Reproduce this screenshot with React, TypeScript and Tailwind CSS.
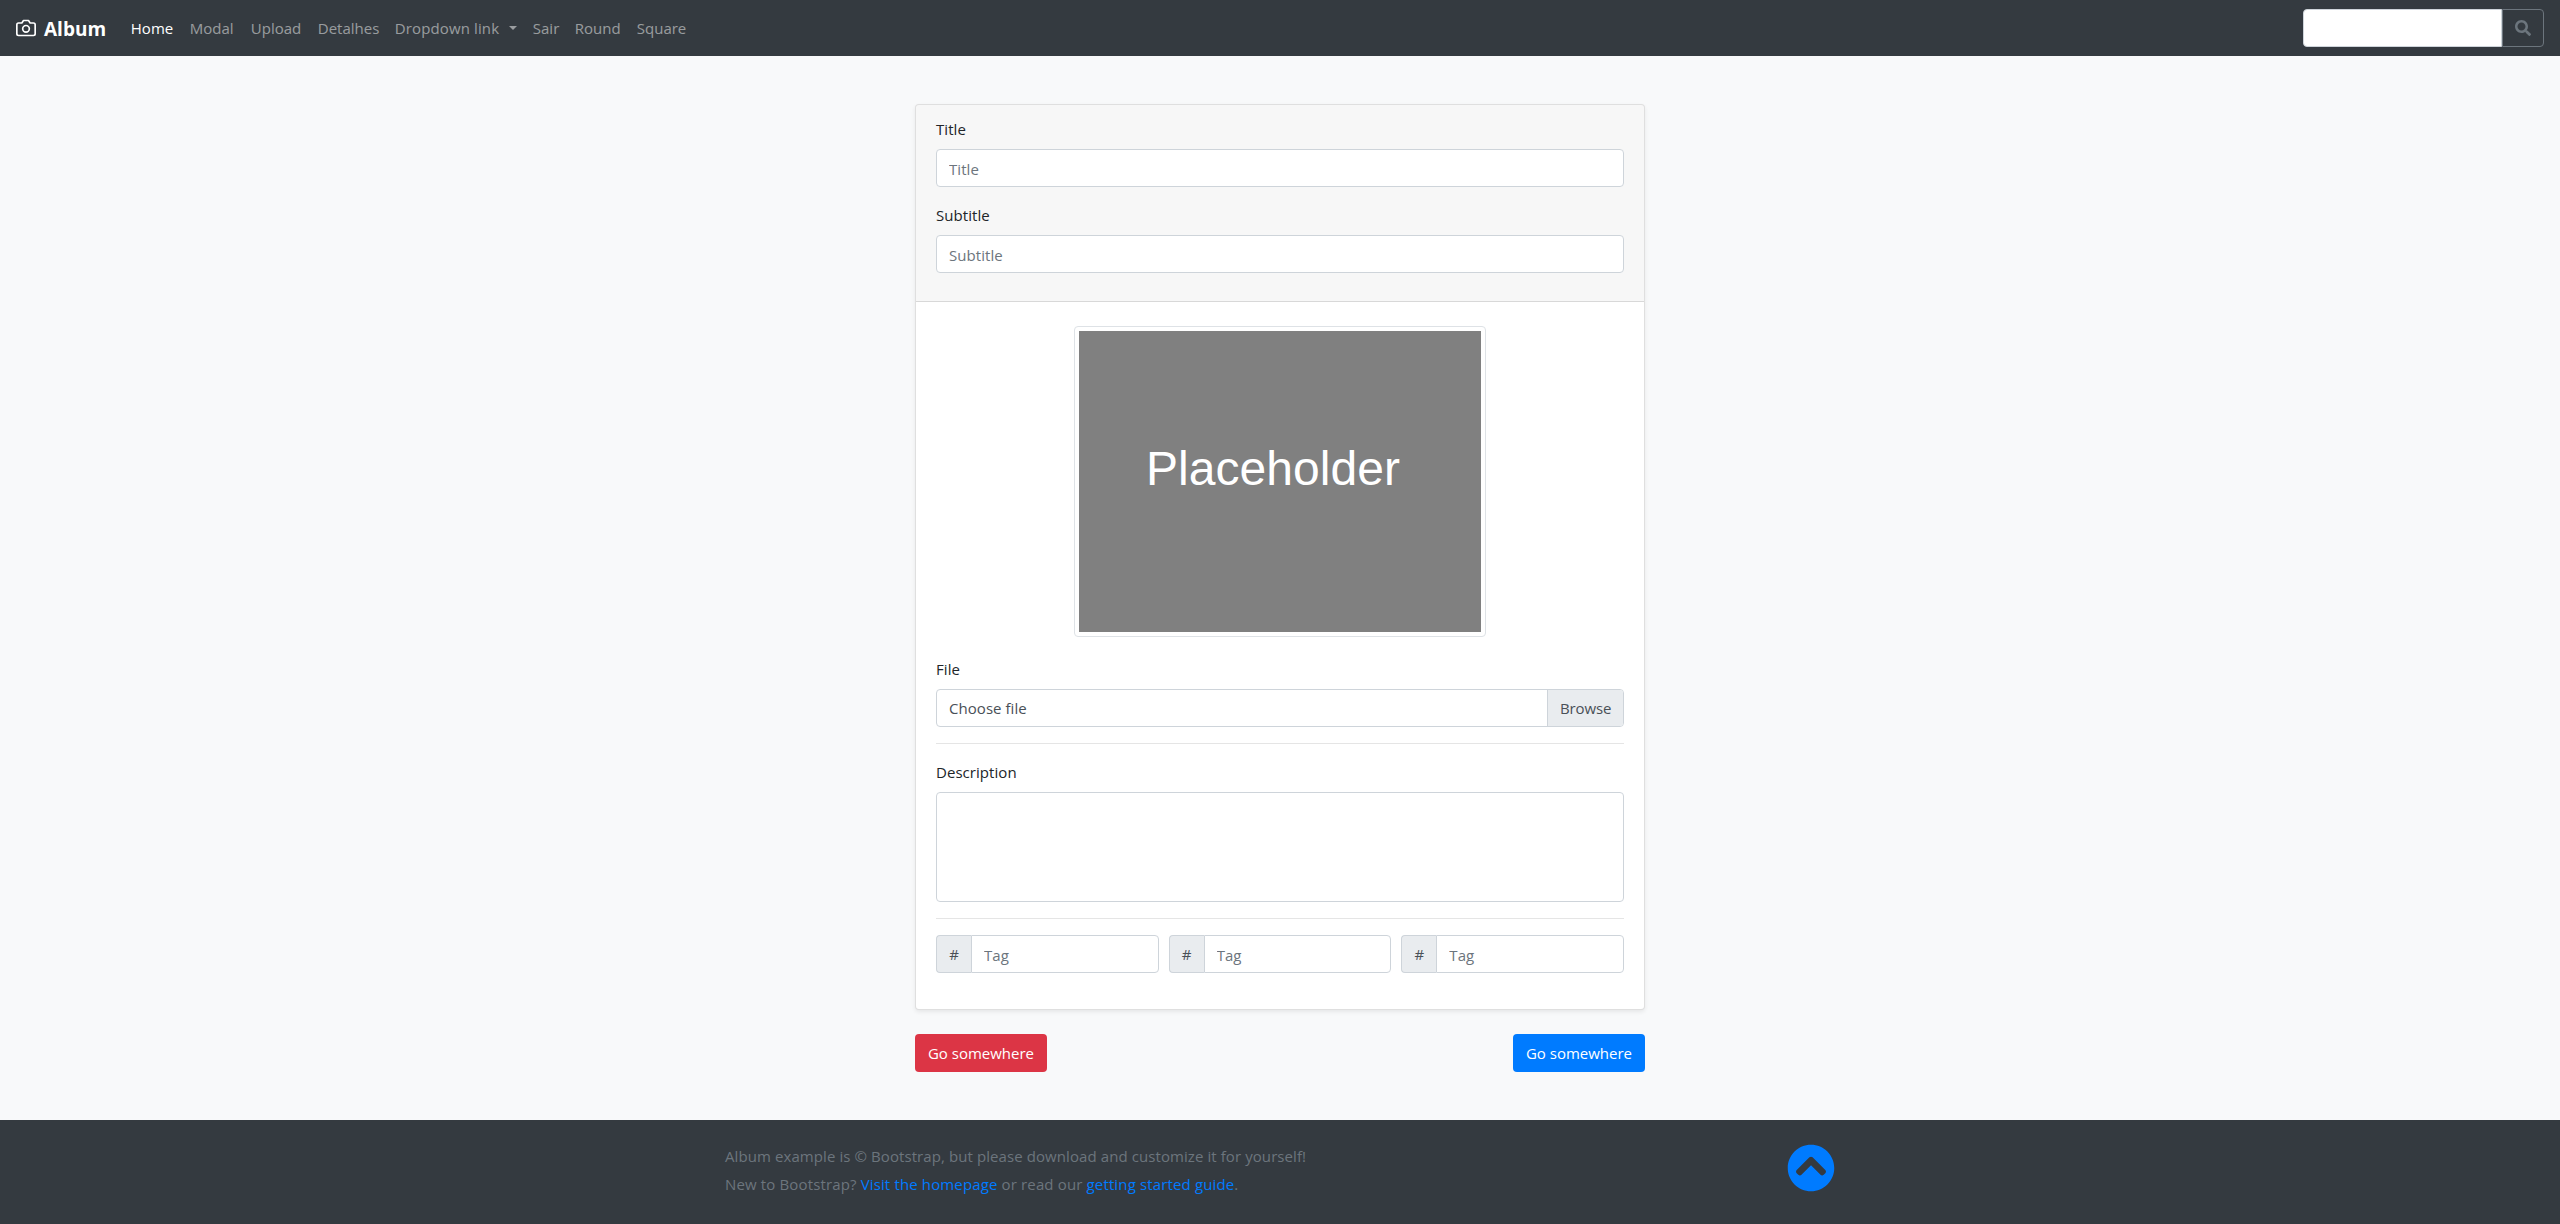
import React from "react";
import { FaChevronCircleUp, FaSearch } from "react-icons/fa";

const navItems = [
  { label: "Home", width: "w-[59px]", active: true },
  { label: "Modal", width: "w-[61px]" },
  { label: "Upload", width: "w-[67px]" },
  { label: "Detalhes", width: "w-[77px]" },
  { label: "Dropdown link", width: "w-[138px] tracking-[0.12px]", caret: true },
  { label: "Sair", width: "w-[42px]" },
  { label: "Round", width: "w-[62px]" },
  { label: "Square", width: "w-[65px]" },
];

const field =
  "block w-full rounded border border-[#ced4da] bg-white px-3 text-[#495057] outline-none placeholder:text-[#6c757d] placeholder:opacity-100";

function CameraIcon() {
  return (
    <svg
      className="mr-2 size-5"
      viewBox="0 0 24 24"
      fill="none"
      stroke="currentColor"
      strokeWidth="2"
      strokeLinecap="round"
      strokeLinejoin="round"
    >
      <path d="M23 19a2 2 0 0 1-2 2H3a2 2 0 0 1-2-2V8a2 2 0 0 1 2-2h4l2-3h6l2 3h4a2 2 0 0 1 2 2z" />
      <circle cx="12" cy="13" r="4" />
    </svg>
  );
}

function Navbar() {
  return (
    <header className="flex h-14 items-center bg-[#343a40] px-4">
      <a href="#" className="flex w-[106.8px] items-center text-white">
        <CameraIcon />
        <strong className="pt-px text-[19px] leading-[30px] font-bold">Album</strong>
      </a>
      <nav className="flex">
        {navItems.map((item) => (
          <a
            key={item.label}
            href="#"
            className={`flex items-center px-2 whitespace-nowrap ${item.width} ${
              item.active ? "text-white" : "text-white/50"
            }`}
          >
            {item.label}
            {item.caret && (
              <span className="ml-auto border-x-[4.8px] border-t-[4.8px] border-x-transparent border-t-current" />
            )}
          </a>
        ))}
      </nav>
      <form className="ml-auto flex h-[38px]">
        <input className="w-[199px] rounded-l border border-[#ced4da] bg-white px-3 outline-none" />
        <button
          type="button"
          className="flex w-[42px] items-center justify-center rounded-r border border-[#6c757d] text-base text-[#6c757d]"
        >
          <FaSearch />
        </button>
      </form>
    </header>
  );
}

function TextField({ label }: { label: string }) {
  return (
    <div className="mb-4">
      <label className="mb-2 block">{label}</label>
      <input placeholder={label} className={`${field} h-[38px] pt-px`} />
    </div>
  );
}

function TagField() {
  return (
    <div className="flex h-[38px] min-w-0 flex-1">
      <span className="flex w-[35px] shrink-0 items-center justify-center rounded-l border border-r-0 border-[#ced4da] bg-[#e9ecef] text-[#495057]">
        #
      </span>
      <input
        placeholder="Tag"
        className="min-w-0 flex-1 rounded-r border border-[#ced4da] bg-white px-3 pt-0.5 outline-none placeholder:text-[#6c757d] placeholder:opacity-100"
      />
    </div>
  );
}

function UploadCard() {
  return (
    <section className="h-[906px] overflow-hidden rounded border border-black/[.125] bg-white bg-clip-border tracking-[0.05px] shadow-[0_2px_4px_rgba(0,0,0,0.075)]">
      <div className="border-b border-black/[.125] bg-black/[.03] px-5 py-3">
        <TextField label="Title" />
        <TextField label="Subtitle" />
      </div>
      <div className="px-5 pt-6">
        <div className="mx-auto mb-5 h-[311px] w-[412px] rounded border border-[#dee2e6] bg-white p-1">
          <div className="h-full bg-[#808080] pt-[110px] pl-[67px] font-['Liberation_Sans',Arial,sans-serif] text-[48px] leading-[55px] text-white">
            Placeholder
          </div>
        </div>
        <label className="mb-2 block">File</label>
        <div className="flex h-[38px] items-stretch overflow-hidden rounded border border-[#ced4da] leading-9 text-[#495057]">
          <span className="flex-1 px-3">Choose file</span>
          <span className="w-[76px] border-l border-[#ced4da] bg-[#e9ecef] px-3 tracking-[-0.1px]">
            Browse
          </span>
        </div>
        <hr className="my-4 border-black/10" />
        <label className="mb-2 block">Description</label>
        <textarea className={`${field} h-[110px] resize-none`} />
        <hr className="my-4 border-black/10" />
        <div className="flex gap-2.5">
          <TagField />
          <TagField />
          <TagField />
        </div>
      </div>
    </section>
  );
}

function Footer() {
  return (
    <footer className="h-[104px] bg-[#343a40] pt-6">
      <div className="mx-auto flex w-[1110px] justify-between text-[#6c757d]">
        <div>
          <p className="mb-1 tracking-[0.085px]">
            Album example is © Bootstrap, but please download and customize it for yourself!
          </p>
          <p className="tracking-[0.14px]">
            New to Bootstrap?{" "}
            <a href="#" className="text-[#007bff]">
              Visit the homepage
            </a>{" "}
            or read our{" "}
            <a href="#" className="text-[#007bff]">
              getting started guide
            </a>
            .
          </p>
        </div>
        <a href="#" className="mr-[0.5px] text-5xl text-[#007bff]">
          <FaChevronCircleUp />
        </a>
      </div>
    </footer>
  );
}

export default function App() {
  return (
    <div className="min-h-[1224px] bg-[#f8f9fa] font-['Open_Sans','Noto_Sans',sans-serif] text-[15px] leading-6 text-[#212529]">
      <Navbar />
      <main className="mx-auto w-[730px] py-12">
        <UploadCard />
        <div className="mt-6 flex justify-between text-white">
          <button type="button" className="h-[38px] w-[132px] rounded bg-[#dc3545]">
            Go somewhere
          </button>
          <button type="button" className="h-[38px] w-[132px] rounded bg-[#007bff]">
            Go somewhere
          </button>
        </div>
      </main>
      <Footer />
    </div>
  );
}
